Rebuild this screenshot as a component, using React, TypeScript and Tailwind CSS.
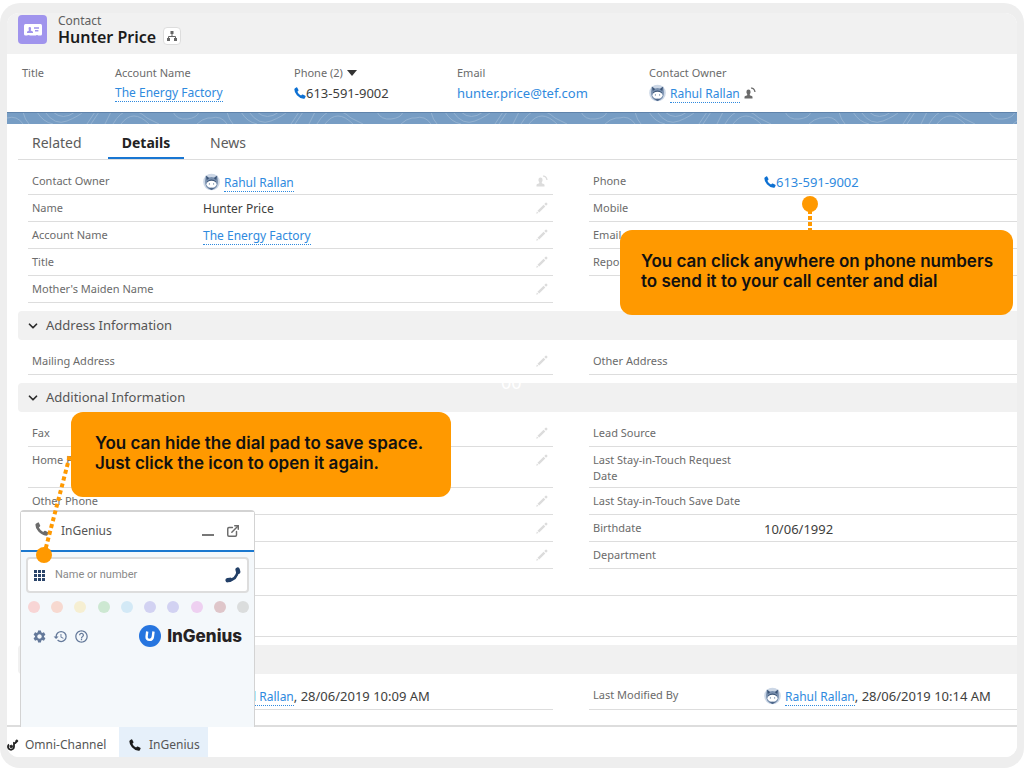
import type { ReactNode } from 'react';
import { ChevronDown, ExternalLink } from 'lucide-react';
import { FaPhone } from 'react-icons/fa';
import { MdHistory, MdHelpOutline, MdSettings } from 'react-icons/md';

interface Field {
  label?: string;
  value?: ReactNode;
  icon?: 'edit' | 'owner';
  height?: string;
}

function PhoneIcon({ className = '' }: { className?: string }) {
  return (
    <svg viewBox="0 0 14 14" className={className} fill="currentColor">
      <path d="M1.2 1.4 3 .4Q3.6.2 3.9.8L5.2 3.6Q5.4 4.2 4.9 4.6L3.9 5.5Q5 8.2 8.2 9.9L9.2 8.9Q9.6 8.5 10.2 8.8L13.2 10.3Q13.8 10.7 13.5 11.3L12.6 13Q12.2 13.8 11.2 13.7 6.6 13.2 3.4 9.6.3 6 .4 2.7.5 1.8 1.2 1.4Z" />
    </svg>
  );
}

function PencilIcon() {
  return (
    <svg viewBox="0 0 12 12" className="w-3 h-3" fill="currentColor">
      <path d="M0.2 11.8.9 9.5 2.5 11.1ZM1.5 8.8 7.6 2.7 9.3 4.4 3.2 10.5ZM8.3 2 9.6.7Q10.1.2 10.6.7L11.3 1.4Q11.8 1.9 11.3 2.4L10 3.7Z" />
    </svg>
  );
}

function ChangeOwnerIcon() {
  return (
    <svg viewBox="0 0 12 12" className="w-3 h-3" fill="currentColor">
      <path d="M4.5 2.5a2.1 2.4 0 0 1 2.1 2.4c0 1-.4 1.6-.8 2.2v1.1c0 .3 2.7.6 2.7 1.5v1.7H.5V9.7c0-.9 2.7-1.2 2.7-1.5v-1.1c-.4-.6-.8-1.2-.8-2.2a2.1 2.4 0 0 1 2.1-2.4Z" />
      <path d="M7 1.2c2-.4 3.6 1 4 3.8" fill="none" stroke="currentColor" strokeWidth="1.3" />
    </svg>
  );
}

function Avatar() {
  return (
    <svg viewBox="0 0 18 18" className="w-[17px] h-[18px] shrink-0">
      <circle cx="9" cy="9" r="8.8" fill="#ccd7e6" />
      <path d="M3 2 6.2 4.2Q9 3.4 11.8 4.2L15 2 15.8 8Q16.4 15.8 9 17.5 1.6 15.8 2.2 8Z" fill="#7990ae" />
      <path d="M3.2 2.5 6.5 5 4 7ZM14.8 2.5 11.5 5 14 7ZM4 8.5Q9 4 14 8.5L13 9.5Q9 7 5 9.5Z" fill="#3c5577" />
      <ellipse cx="9" cy="11.4" rx="5.3" ry="3.7" fill="#fff" />
      <path d="M6 15.5Q9 14.8 12 15.5L9 17.4Z" fill="#4e678a" />
      <circle cx="6.8" cy="11" r=".7" fill="#66809f" />
      <circle cx="11.2" cy="11" r=".7" fill="#66809f" />
    </svg>
  );
}

function TextLink({ children }: { children: ReactNode }) {
  return (
    <a href="#" className="text-xs text-[#2f8ade] border-b border-dotted border-[#2f8ade]">
      {children}
    </a>
  );
}

function Owner({ suffix = '' }: { suffix?: string }) {
  return (
    <span className="flex h-4 items-center whitespace-nowrap">
      <Avatar />
      <span className="ml-1 text-[13px] leading-4"><TextLink>Rahul Rallan</TextLink>{suffix}</span>
    </span>
  );
}

function PhoneNumber({ className = '' }: { className?: string }) {
  return (
    <button className={`flex items-center text-[13px] leading-4 ${className}`}>
      <PhoneIcon className="w-3 h-3 text-[#0d70d2]" />
      613-591-9002
    </button>
  );
}

function FieldRow({ label, value, icon, height = 'h-[27px]' }: Field) {
  return (
    <div className={`flex items-start border-b border-[#dddddd] pl-1 pr-[5px] pt-[5px] ${height}`}>
      <dt className="w-[171px] shrink-0 pr-4 text-[11px] leading-4 text-[#6b6b6b]">{label}</dt>
      <dd className="flex-1 pt-px text-xs leading-4 text-[#3e3e3c]">{value}</dd>
      {icon && (
        <button aria-label={`Edit ${label ?? 'field'}`} className="mt-0.5 text-[#dcdcdc]">
          {icon === 'owner' ? <ChangeOwnerIcon /> : <PencilIcon />}
        </button>
      )}
    </div>
  );
}

function FieldColumns({ left, right }: { left: Field[]; right: Field[] }) {
  return (
    <div className="grid grid-cols-[525fr_428fr] gap-9 pl-2.5 pt-2">
      {[left, right].map((fields, i) => (
        <dl key={i}>
          {fields.map((f, j) => <FieldRow key={j} {...f} />)}
        </dl>
      ))}
    </div>
  );
}

function SectionHeader({ title }: { title?: string }) {
  return (
    <h2 className="mt-2 h-[29px] rounded-l bg-[#f1f1f1]">
      {title && (
        <button className="flex h-full items-center gap-1.5 pl-2 text-[13px] text-[#555555]">
          <ChevronDown size={14} strokeWidth={3} className="text-[#2b2b2b]" />
          {title}
        </button>
      )}
    </h2>
  );
}

function Highlight({ label, children, className }: { label: ReactNode; children?: ReactNode; className: string }) {
  return (
    <div className={`shrink-0 ${className}`}>
      <div className="flex items-center text-[11px] leading-4 text-[#6b6b6b]">{label}</div>
      <div className="mt-0.5 flex h-5 items-center text-[13px] leading-4 text-[#3e3e3c]">{children}</div>
    </div>
  );
}

function ContourBand() {
  return (
    <svg className="block h-3 w-full bg-[#779dc4]" role="presentation">
      <defs>
        <pattern id="contours" width="204" height="12" patternUnits="userSpaceOnUse">
          <g fill="none" stroke="#93b1d0" strokeWidth="1">
            <path d="M30 0q6 10 16 12M38 0q10 14 22 9T76 0M46 0q10 9 22 0M80 12 88 0M84 12 92 0M98 12 104 0" />
            <path d="M114 12q12-16 28 0M106 12q14-24 34-6l12 6M166 0q4 8 14 7t12-7M190 12q10-10 24-4M0 6q10-3 16 6M16 0q2 8 6 12" />
          </g>
        </pattern>
      </defs>
      <rect width="100%" height="12" fill="url(#contours)" />
      <rect width="100%" height="1" fill="#5f83ab" />
    </svg>
  );
}

const LINE_COLORS = [
  'bg-[#f8d5d5]', 'bg-[#f7d9d0]', 'bg-[#f6efd2]', 'bg-[#cde8d2]', 'bg-[#d3e9f6]',
  'bg-[#d2d2f2]', 'bg-[#d2d2f2]', 'bg-[#eed0f1]', 'bg-[#dfc6ca]', 'bg-[#dbdddd]',
];

function SoftphonePanel() {
  return (
    <section className="absolute bottom-full left-[13px] flex h-[217px] w-[235px] flex-col rounded-t border border-t-2 border-b-0 border-[#d3d3d3] bg-[#f4f8fb]">
      <header className="flex h-10 shrink-0 items-center border-b-2 border-[#1b78cf] bg-white px-3.5 text-xs text-[#555555]">
        <PhoneIcon className="mb-1 h-3.5 w-3.5 text-[#6b6b6b]" />
        <span className="ml-3 flex-1">InGenius</span>
        <button aria-label="Minimize" className="mt-2 mr-3 h-0.5 w-3 bg-[#777777]" />
        <button aria-label="Pop out" className="text-[#6b6b6b]"><ExternalLink size={14} strokeWidth={2.5} /></button>
      </header>
      <div className="mx-[5px] mt-[5px] flex h-9 shrink-0 items-center rounded border-2 border-[#dddddd] bg-white px-1.5">
        <button aria-label="Dial pad" className="grid grid-cols-3 gap-px">
          {Array.from({ length: 9 }, (_, i) => <span key={i} className="h-[3px] w-[3px] bg-[#2b456b]" />)}
        </button>
        <input
          aria-label="Name or number"
          placeholder="Name or number"
          className="ml-2.5 min-w-0 flex-1 font-['Roboto',sans-serif] text-[11px] placeholder:text-[#8a8a8a]"
        />
        <button aria-label="Dial">
          {/* handset with its ear piece at the upper right */}
          <svg viewBox="0 0 16 16" className="h-4 w-4" fill="none" stroke="#223f67" strokeLinecap="round">
            <path d="M3 13.2Q11.8 13.2 13 3" strokeWidth="2.6" />
            <path d="M12.6 2.6 13.2 4.8M2.6 13.2 5 12.8" strokeWidth="4.4" />
          </svg>
        </button>
      </div>
      <div className="mt-2 flex justify-between pl-[7px] pr-[5px]">
        {LINE_COLORS.map((color, i) => <span key={i} className={`h-3 w-3 rounded-full ${color}`} />)}
      </div>
      <div className="mt-[11px] flex items-center gap-1.5 pl-[11px] pr-3 text-[#64799a]">
        <button aria-label="Settings"><MdSettings size={15} /></button>
        <button aria-label="History"><MdHistory size={15} /></button>
        <button aria-label="Help"><MdHelpOutline size={15} /></button>
        <span className="ml-auto flex items-center gap-1.5">
          <svg viewBox="0 0 22 22" className="h-[22px] w-[22px]">
            <circle cx="11" cy="11" r="11" fill="#2675df" />
            <path d="M8.2 6.5 7.6 11.5Q7.4 14.9 10.5 14.9 13.5 14.9 13.9 11.5L14.5 6.5" fill="none" stroke="#fff" strokeWidth="2.4" />
          </svg>
          <span className="font-['Inter',sans-serif] text-[17px] leading-6 font-extrabold text-[#262223]">InGenius</span>
        </span>
      </div>
    </section>
  );
}

function Callout({ className, children }: { className: string; children: ReactNode }) {
  return (
    <aside className={`absolute flex h-[85px] flex-col justify-center rounded-xl bg-[#ff9900] pb-1 font-['Inter',sans-serif] text-[17px] leading-5 font-semibold whitespace-nowrap text-[#111111] ${className}`}>
      {children}
    </aside>
  );
}

export default function App() {
  return (
    <div className="min-h-screen bg-white pt-[3px] font-['Noto_Sans',sans-serif]">
      <div className="relative flex min-h-[765px] flex-col rounded-[20px] bg-[#eeeeee] px-[7px] pt-2.5 pb-[11px]">
        <div className="relative flex flex-1 flex-col rounded-xl bg-white">
          <header className="flex h-[41px] items-start rounded-t-xl bg-[#f1f1f1] pl-[11px]">
            <span className="mt-0.5 flex h-[29px] w-[29px] items-center justify-center rounded bg-[#a094ed]">
              <svg viewBox="0 0 18 14" className="h-3.5 w-[18px]">
                <rect y="1" width="18" height="11.5" rx="1.5" fill="#fff" />
                <path d="M3 10V9q0-1 2-1.6Q3.8 4 5.8 4t.9 3.4Q9 8 9 9v1Z" fill="#a094ed" />
                <path d="M10 5h5M11 7.7h3.4M3.5 13h2M12 13h2" stroke="#a094ed" strokeWidth="1.4" />
              </svg>
            </span>
            <div className="ml-[11px]">
              <div className="text-xs leading-4 text-[#606060]">Contact</div>
              <h1 className="text-base leading-4 font-semibold text-[#1b1b1b]">Hunter Price</h1>
            </div>
            <button aria-label="View hierarchy" className="mt-3.5 ml-[7px] flex h-[18px] w-[18px] items-center justify-center rounded border border-[#dddddd] bg-white">
              <svg viewBox="0 0 10 10" className="h-2.5 w-2.5" fill="#666">
                <path d="M3.5 0h3v3h-3zM0 7h3v3H0zM7 7h3v3H7z" />
                <path d="M5 3v2.500M1.5 7V5.500h7V7" fill="none" stroke="#666" />
              </svg>
            </button>
          </header>

          <div className="flex h-[58px] pt-[11px] pl-[15px]">
            <Highlight className="w-[93px]" label="Title" />
            <Highlight className="w-[179px]" label="Account Name"><TextLink>The Energy Factory</TextLink></Highlight>
            <Highlight
              className="w-[163px]"
              label={<>Phone (2)<span className="ml-1 border-x-5 border-t-6 border-x-transparent border-t-[#333333]" /></>}
            >
              <PhoneNumber />
            </Highlight>
            <Highlight className="w-48" label="Email"><a href="#" className="text-[#2f8ade]">hunter.price@tef.com</a></Highlight>
            <Highlight className="w-40" label="Contact Owner">
              <Owner />
              <button aria-label="Change owner" className="ml-1 text-[#6b6b6b]"><ChangeOwnerIcon /></button>
            </Highlight>
          </div>
          <ContourBand />

          <main className="flex-1 overflow-hidden pl-[11px]">
            <nav className="flex h-9 border-b border-[#dddddd] text-sm text-[#5c5c5c]" role="tablist">
              <button role="tab" className="w-[90px] pt-0.5 pl-3.5 text-left">Related</button>
              <button role="tab" aria-selected className="w-[76px] border-b-2 border-[#1976d2] pt-1 font-bold text-[#222222]">Details</button>
              <button role="tab" className="pt-0.5 pl-[26px]">News</button>
            </nav>
            <FieldColumns
              left={[
                { label: 'Contact Owner', value: <Owner />, icon: 'owner' },
                { label: 'Name', value: 'Hunter Price', icon: 'edit' },
                { label: 'Account Name', value: <TextLink>The Energy Factory</TextLink>, icon: 'edit' },
                { label: 'Title', icon: 'edit' },
                { label: "Mother's Maiden Name", icon: 'edit' },
              ]}
              right={[
                { label: 'Phone', value: <PhoneNumber className="text-[#2f8ade]" /> },
                { label: 'Mobile' },
                { label: 'Email' },
                { label: 'Reports To' },
              ]}
            />
            <SectionHeader title="Address Information" />
            <FieldColumns left={[{ label: 'Mailing Address', icon: 'edit' }]} right={[{ label: 'Other Address' }]} />
            <SectionHeader title="Additional Information" />
            <FieldColumns
              left={[
                { label: 'Fax', icon: 'edit' },
                { label: 'Home Phone', icon: 'edit', height: 'h-[41px]' },
                { label: 'Other Phone', icon: 'edit' },
                { icon: 'edit' },
                { icon: 'edit' },
              ]}
              right={[
                { label: 'Lead Source' },
                { label: 'Last Stay-in-Touch Request Date', height: 'h-[41px]' },
                { label: 'Last Stay-in-Touch Save Date' },
                { label: 'Birthdate', value: <span className="text-[13px]">10/06/1992</span> },
                { label: 'Department' },
              ]}
            />
            <div className="ml-2.5 h-[27px] border-b border-[#dddddd]" />
            <div className="ml-2.5 h-[41px] border-b border-[#dddddd]" />
            <SectionHeader />
            <FieldColumns
              left={[{ value: <Owner suffix=", 28/06/2019 10:09 AM" />, height: 'h-7' }]}
              right={[{ label: 'Last Modified By', value: <Owner suffix=", 28/06/2019 10:14 AM" />, height: 'h-7' }]}
            />
          </main>

          <footer className="relative flex h-8 rounded-b-xl border-t-2 border-[#dddddd] bg-white text-xs text-[#555555]">
            <SoftphonePanel />
            <button className="flex w-28 items-center gap-1.5 pt-1.5">
              <svg viewBox="0 0 12 12" className="h-3 w-3" fill="none" stroke="#222">
                <path d="M2 5.5A3 3 0 1 0 7 7.5V4Q9 4.5 9.5 2" strokeWidth="1.8" />
                <circle cx="4.3" cy="7.5" r="1.3" fill="#222" />
                <circle cx="9.8" cy="2" r="1" fill="#222" />
              </svg>
              Omni-Channel
            </button>
            <button className="flex w-[89px] items-center gap-2 bg-[#e6f0fa] pt-1.5 pl-2.5">
              <PhoneIcon className="h-3 w-3 text-[#1b1b1b]" />
              InGenius
            </button>
          </footer>
        </div>

        <span className="absolute top-[365px] left-1/2 -ml-[11px] text-lg leading-7 text-white">00</span>

        {/* guided tour callouts */}
        <Callout className="top-[227px] right-[11px] w-[393px] pl-[21px]">
          <span>You can click anywhere on phone numbers</span>
          <span>to send it to your call center and dial</span>
          <svg viewBox="0 0 16 36" className="absolute -top-9 left-[182px] h-9 w-4">
            <circle cx="8" cy="10" r="8" fill="#ff9900" />
            <path d="M8 16V36" stroke="#ff9900" strokeWidth="4" strokeDasharray="4 2" />
          </svg>
        </Callout>
        <Callout className="top-[409px] left-[71px] w-[380px] pl-6">
          <span>You can hide the dial pad to save space.</span>
          <span>Just click the icon to open it again.</span>
          <svg viewBox="0 0 36 112" className="absolute top-10 -left-9 h-28 w-9">
            <circle cx="9" cy="103" r="8" fill="#ff9900" />
            <path d="M9 103 35 3" stroke="#ff9900" strokeWidth="4" strokeDasharray="4 3" />
          </svg>
        </Callout>
      </div>
    </div>
  );
}
